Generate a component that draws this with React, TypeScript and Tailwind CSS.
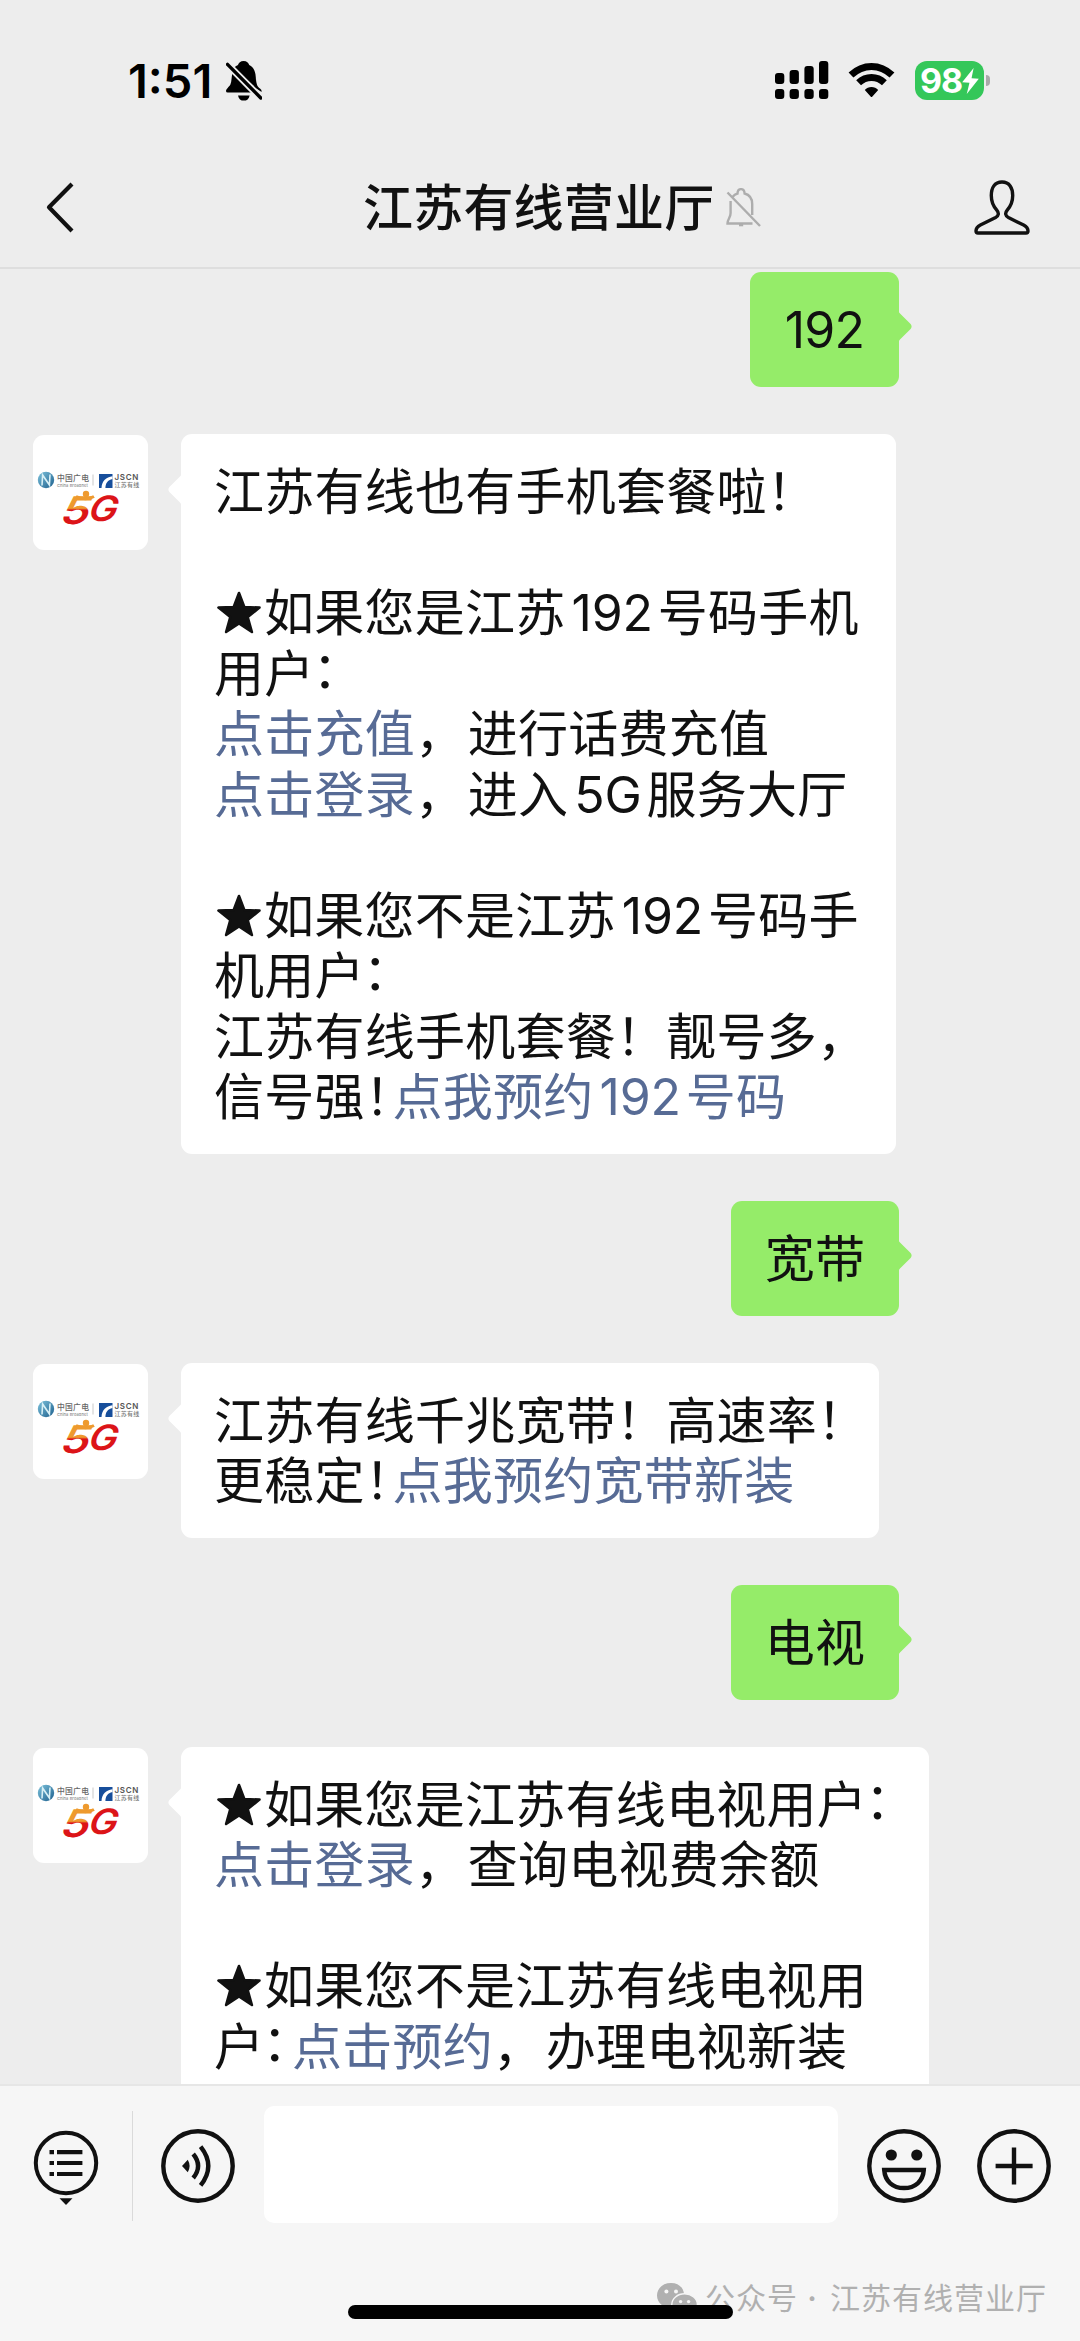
import React from 'react';

interface BubbleProps {
  children: React.ReactNode;
  width: string;
}

const BoltIcon: React.FC = () => (
  <svg width="17" height="26" viewBox="0 0 16 25">
    <path d="M11 0 L0 13.6 L7 14.2 L4.4 25 L16 10.4 L9 9.8 Z" fill="#fff" />
  </svg>
);

const StatusBar: React.FC = () => (
  <div className="flex h-[140px] shrink-0 items-start pt-[61px] text-black">
    <span className="ml-[128px] w-[98px] whitespace-nowrap text-[47px] font-semibold leading-[40px]">1:51</span>
    <svg width="36" height="40" viewBox="0 0 36 40">
      <path
        d="M17.6 0 C14.4 0 12.6 1.8 12 4 C10 4.8 8.6 6.2 7.6 8 L31.6 28 C31 26 30.2 24.6 30 20 C29.8 11 28.2 6.2 23.2 4 C22.6 1.8 20.8 0 17.6 0 Z"
        fill="#000"
      />
      <path d="M30 18 C30.2 24 32 26 34 27.6 Q36 29 35.6 31 L28 26 Z" fill="#000" />
      <path d="M6.4 12 C5.4 16 5.8 20.4 4.4 23.4 C3 26 0 27.6 0 30 Q0 31.6 1.8 31.6 H28 Z" fill="#000" />
      <path d="M12 34.4 H23.6 C23 38 20.8 39.6 17.8 39.6 C14.8 39.6 12.6 38 12 34.4 Z" fill="#000" />
      <path d="M1.5 3.4 L34.8 37" stroke="#ededed" strokeWidth="7" />
      <path d="M1.5 3.4 L34.8 37" stroke="#000" strokeWidth="3.4" strokeLinecap="round" />
    </svg>
    <svg className="ml-[513px]" width="54" height="38" viewBox="0 0 54 38">
      <rect x="0" y="12" width="9.3" height="11" rx="3" />
      <rect x="14.6" y="9" width="9.3" height="14" rx="3" />
      <rect x="29.4" y="5" width="9.3" height="18" rx="3" />
      <rect x="44" y="0" width="9.3" height="23" rx="3" />
      <rect x="0" y="28" width="9.3" height="10" rx="3" />
      <rect x="14.6" y="28" width="9.3" height="10" rx="3" />
      <rect x="29.4" y="28" width="9.3" height="10" rx="3" />
      <rect x="44" y="28" width="9.3" height="10" rx="3" />
    </svg>
    <svg className="ml-[19px] mt-[1px]" width="47" height="36" viewBox="0 0 47 36">
      <path d="M3 13 C15 1.5 32 1.5 44 13" fill="none" stroke="#000" strokeWidth="7" />
      <path d="M10.6 20.8 C18 13.8 29 13.8 36.4 20.8" fill="none" stroke="#000" strokeWidth="7" />
      <path d="M16.8 28 C20 24 27 24 30.2 28 L24.4 34.4 Q23.5 35.4 22.6 34.4 Z" />
    </svg>
    <div className="ml-[20px] flex h-[39px] w-[69px] items-center justify-center rounded-[12px] bg-[#34c759]">
      <span className="text-[34px] font-bold leading-none tracking-[-1px] text-white">98</span>
      <BoltIcon />
    </div>
    <div className="ml-[2px] mt-[14px] h-[11px] w-[4px] rounded-r-full bg-[#a9a9a9]" />
  </div>
);

const Header: React.FC = () => (
  <header className="flex h-[129px] shrink-0 items-start border-b-2 border-[#dedede] text-[#111]">
    <svg className="ml-[46px] mt-[42px]" width="29" height="51" viewBox="0 0 29 51">
      <path d="M26 2 L3 25.3 L26 49" fill="none" stroke="#111" strokeWidth="4.2" strokeLinejoin="round" />
    </svg>
    <h1 className="ml-[288px] mt-[33px] w-[363px] whitespace-nowrap text-[50px] font-medium leading-[70px] tracking-[0.2px]">
      江苏有线营业厅
    </h1>
    <svg className="mt-[48px]" width="36" height="40" viewBox="0 0 36 40" fill="none" stroke="#adadad" strokeWidth="2.4">
      <path d="M6.5 9 C8 7 9.5 6 11.5 5.5 C11.8 -0.3 18.2 -0.3 18.6 5.5 C24 7 26.2 11 26.2 16 V27" />
      <path d="M4.6 13 V25 C4.6 30 1.5 31 1.5 35.5 H26.5" />
      <path d="M1.5 4.5 L34 38" />
      <path d="M13 36.8 H17.2" strokeWidth="3" />
    </svg>
    <svg className="ml-[212px] mt-[40px]" width="56" height="56" viewBox="0 0 56 56">
      <path
        d="M28 2 C20.5 2 17.3 8 17.3 15.5 C17.3 22 19.6 26.5 22.6 29.8 C25.4 33 24.6 36 21.6 37.6 L6.4 45 C3 46.8 2 48.6 2 51 Q2 53 4 53 H52 Q54 53 54 51 C54 48.6 53 46.8 49.6 45 L34.4 37.6 C31.4 36 30.6 33 33.4 29.8 C36.4 26.5 38.7 22 38.7 15.5 C38.7 8 35.5 2 28 2 Z"
        fill="none"
        stroke="#111"
        strokeWidth="3.4"
      />
    </svg>
  </header>
);

const Avatar: React.FC = () => (
  <svg className="mt-px shrink-0 rounded-[11px] bg-white" width="115" height="115" viewBox="0 0 115 115">
    <defs>
      <linearGradient id="five" x1="0" y1="0" x2="0" y2="1">
        <stop offset="0.46" stopColor="#ee9a2e" />
        <stop offset="0.5" stopColor="#dc1418" />
      </linearGradient>
      <linearGradient id="globe" x1="0" y1="0" x2="1" y2="1">
        <stop offset="0" stopColor="#7ec3dc" />
        <stop offset="1" stopColor="#1d5f8d" />
      </linearGradient>
    </defs>
    <circle cx="13" cy="45" r="8.2" fill="url(#globe)" />
    <path d="M9 50.5 L9.6 40 L16.4 50 L17 39.5" fill="none" stroke="#d8f0f6" strokeWidth="1.6" />
    <text x="24" y="46" fontSize="7.8" fontWeight="500" fill="#666">中国广电</text>
    <text x="24" y="52" fontSize="4" fontWeight="500" fill="#888" textLength="31">China Broadnet</text>
    <path d="M60 39.5 V50.5" stroke="#bbb" strokeWidth="0.8" />
    <rect x="66" y="39" width="13.5" height="14" fill="#174e9b" />
    <path d="M68.5 53 C69 45.5 73 42.5 79.5 41.3 V43.9 C74.5 45.1 72.6 48 72.4 53 Z" fill="#fff" />
    <text x="81.5" y="45" fontSize="8" fontWeight="600" fill="#555" textLength="24">JSCN</text>
    <text x="81.5" y="52.4" fontSize="6" fontWeight="500" fill="#777">江苏有线</text>
    <g transform="translate(13 -1.5) skewX(-10)" fontWeight="600" fontStyle="italic">
      <text x="30" y="90.5" fontSize="38" fill="url(#five)" textLength="29" lengthAdjust="spacingAndGlyphs">5</text>
      <text x="57" y="88" fontSize="35" fill="#dc1418" textLength="29" lengthAdjust="spacingAndGlyphs">G</text>
    </g>
    <circle cx="53" cy="59" r="3.2" fill="#ee9a2e" />
    <path d="M43 61.5 Q53 66 61 61.5" fill="none" stroke="#ee9a2e" strokeWidth="3" />
  </svg>
);

const Sent: React.FC<BubbleProps> = ({ children, width }) => (
  <div className="flex shrink-0 justify-end pr-[168px]">
    <div className={`${width} h-[115px] rounded-[11px] bg-[#95ec69] pt-[28px] text-center`}>{children}</div>
    <svg className="mt-[38px] -ml-px" width="14" height="33" viewBox="0 0 14 33">
      <path d="M0 0 Q0.5 2 2 3.6 L12.6 14 Q14.6 16.5 12.6 19 L2 29.4 Q0.5 31 0 33 Z" fill="#95ec69" />
    </svg>
  </div>
);

const Received: React.FC<BubbleProps> = ({ children, width }) => (
  <div className="flex shrink-0 items-start pl-[33px]">
    <Avatar />
    <svg className="ml-[20px] mt-[39px] -mr-px" width="14" height="33" viewBox="0 0 14 33">
      <path d="M14 0 Q13.5 2 12 3.6 L1.4 14 Q-0.6 16.5 1.4 19 L12 29.4 Q13.5 31 14 33 Z" fill="#fff" />
    </svg>
    <div className={`${width} rounded-[11px] bg-white pt-[28px] pb-[26px] pl-[33px] whitespace-nowrap`}>{children}</div>
  </div>
);

const Line: React.FC<{ children?: React.ReactNode }> = ({ children }) => (
  <p className="h-[60.5px]">{children}</p>
);

const Link: React.FC<{ children: React.ReactNode }> = ({ children }) => (
  <a className="text-[#576b95]">{children}</a>
);

const Num: React.FC<{ children: React.ReactNode }> = ({ children }) => (
  <span className="ml-[6px] mr-[5px] tracking-[-0.2px]">{children}</span>
);

const Comma: React.FC = () => <span className="mr-[2.5px]">，</span>;

const Colon: React.FC = () => <span className="relative -top-[4px] -left-[2px]">：</span>;

// punctuation that closes up to the link after it
const Half: React.FC<{ children: React.ReactNode }> = ({ children }) => (
  <span className="mr-[2.5px] [font-feature-settings:'halt']">{children}</span>
);

const Star: React.FC = () => (
  <svg className="mr-[2px] ml-[2px] inline-block align-[-4px]" width="46" height="44" viewBox="0 0 45 44">
    <path
      d="M22.5 2 L27.8 16 L43 16.6 L31.2 26 L35.4 41 L22.5 32.4 L9.6 41 L13.8 26 L2 16.6 L17.2 16 Z"
      fill="#111"
      stroke="#111"
      strokeWidth="2.6"
      strokeLinejoin="round"
    />
  </svg>
);

const Toolbar: React.FC = () => (
  <footer className="relative h-[257px] shrink-0 border-t-2 border-[#e6e6e6] bg-[#f6f6f6]">
    <div className="flex items-start pt-[20px]">
      <svg className="ml-[33px] mt-[23px]" width="66" height="78" viewBox="0 0 66 78">
        <circle cx="33" cy="34" r="30.2" fill="none" stroke="#111" strokeWidth="4" />
        <path d="M16.5 23.2 H21 M24 23.2 H49.4 M16.5 34 H21 M24 34 H49.4 M16.5 45 H21 M24 45 H49.4" stroke="#111" strokeWidth="4.2" />
        <path d="M26.5 69.2 H39.5 L33 76 Z" fill="#111" />
      </svg>
      <div className="ml-[33px] mt-[5px] h-[110px] w-px bg-[#dadada]" />
      <svg className="ml-[27px] mt-[22px]" width="76" height="76" viewBox="0 0 76 76" fill="none" stroke="#111" strokeWidth="4.4">
        <circle cx="38" cy="38" r="34.7" />
        <path d="M22 38 L27.8 31.8 Q31.4 38 27.8 44.2 Z" fill="#111" stroke="none" />
        <path d="M33.2 26 Q43 38 33.2 50" />
        <path d="M40.6 18.6 Q56 38 40.6 57.4" />
      </svg>
      <div className="ml-[28px] h-[117px] w-[574px] rounded-[10px] bg-white" />
      <svg className="ml-[28px] mt-[22px]" width="76" height="76" viewBox="0 0 76 76" fill="none" stroke="#111" strokeWidth="4.4">
        <circle cx="38" cy="38" r="34.7" />
        <circle cx="25.3" cy="27" r="5.6" fill="#111" stroke="none" />
        <circle cx="50.8" cy="27" r="5.6" fill="#111" stroke="none" />
        <path d="M18.2 42 H57.8 C57 53.4 49 60 38 60 C27 60 19 53.4 18.2 42 Z" />
      </svg>
      <svg className="ml-[34px] mt-[22px]" width="76" height="76" viewBox="0 0 76 76" fill="none" stroke="#111" strokeWidth="4.4">
        <circle cx="38" cy="38" r="34.7" />
        <path d="M38 19.4 V56.6 M19.6 38 H56.6" />
      </svg>
    </div>
    <div className="absolute top-[190px] left-[656px] flex items-center text-[#b0b0b0]">
      <svg width="42" height="34" viewBox="0 0 42 34">
        <path d="M15 2 C6.6 2 1 7.6 1 14.4 C1 18.4 2.8 21.6 5.6 23.8 L4.4 28.4 L9.8 26 H17 L28 13 C27.6 6.6 22.4 2 15 2 Z" fill="#b0b0b0" />
        <circle cx="10.4" cy="10.4" r="2" fill="#f6f6f6" />
        <circle cx="20" cy="10.4" r="2" fill="#f6f6f6" />
        <ellipse cx="28.6" cy="23.6" rx="12.8" ry="10.8" fill="#b0b0b0" stroke="#f6f6f6" strokeWidth="1.4" />
        <circle cx="24.6" cy="20.6" r="1.7" fill="#f6f6f6" />
        <circle cx="32.6" cy="20.6" r="1.7" fill="#f6f6f6" />
      </svg>
      <span className="ml-[7px] text-[30px] leading-[44px] tracking-[1px] whitespace-nowrap">公众号</span>
      <span className="w-[32px] pr-[4px] text-center text-[30px] font-semibold leading-[44px]">·</span>
      <span className="text-[30px] leading-[44px] tracking-[1px] whitespace-nowrap">江苏有线营业厅</span>
    </div>
    <div className="absolute top-[219px] left-[348px] h-[14px] w-[385px] rounded-full bg-black" />
  </footer>
);

const App: React.FC = () => {
  return (
    <div className="flex h-[2341px] w-[1080px] flex-col overflow-hidden bg-[#ededed] font-['Inter','Noto_Sans_CJK_SC',sans-serif]">
      <StatusBar />
      <Header />
      <main className="flex min-h-0 flex-1 flex-col gap-[47px] overflow-hidden pt-[3px] text-[50px] leading-[60.5px] tracking-[0.25px] text-[#111]">
        <Sent width="w-[149px]"><span className="tracking-[-0.8px]">192</span></Sent>
        <Received width="w-[715px]">
          <Line>江苏有线也有手机套餐啦！</Line>
          <Line />
          <Line><Star />如果您是江苏<Num>192</Num>号码手机</Line>
          <Line>用户<Colon /></Line>
          <Line><Link>点击充值</Link><Comma />进行话费充值</Line>
          <Line><Link>点击登录</Link><Comma />进入<Num>5G</Num>服务大厅</Line>
          <Line />
          <Line><Star />如果您不是江苏<Num>192</Num>号码手</Line>
          <Line>机用户<Colon /></Line>
          <Line>江苏有线手机套餐！靓号多，</Line>
          <Line>信号强<Half>！</Half><Link>点我预约<Num>192</Num>号码</Link></Line>
        </Received>
        <Sent width="w-[168px]">宽带</Sent>
        <Received width="w-[698px]">
          <Line>江苏有线千兆宽带！高速率！</Line>
          <Line>更稳定<Half>！</Half><Link>点我预约宽带新装</Link></Line>
        </Received>
        <Sent width="w-[168px]">电视</Sent>
        <Received width="w-[748px]">
          <Line><Star />如果您是江苏有线电视用户<Colon /></Line>
          <Line><Link>点击登录</Link><Comma />查询电视费余额</Line>
          <Line />
          <Line><Star />如果您不是江苏有线电视用</Line>
          <Line>户<span className="relative -top-[4px] -left-[2px]"><Half>：</Half></span><Link>点击预约</Link><Comma />办理电视新装</Line>
          <Line />
        </Received>
      </main>
      <Toolbar />
    </div>
  );
};

export default App;
